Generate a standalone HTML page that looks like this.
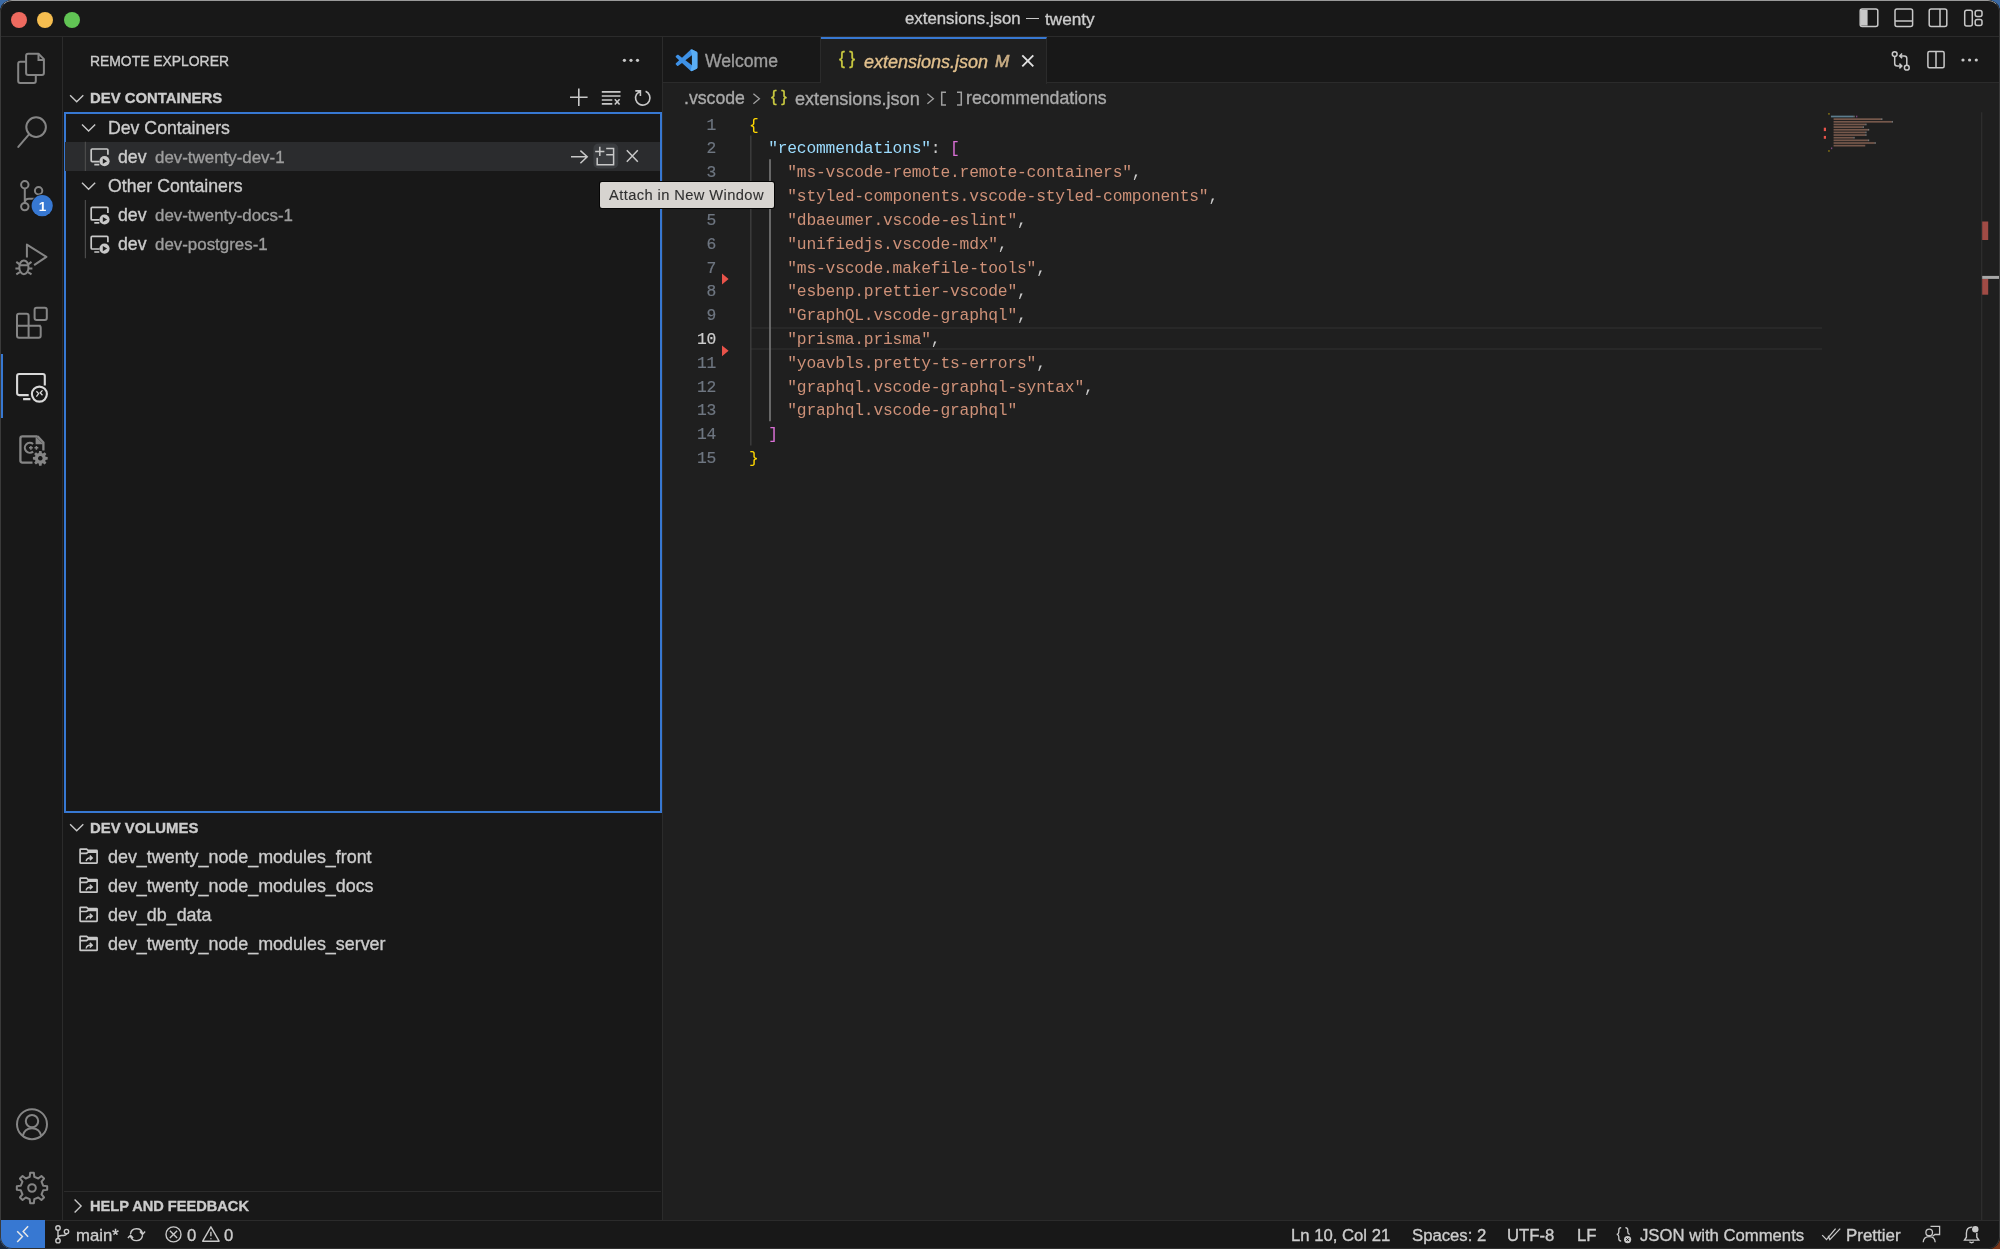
<!DOCTYPE html>
<html><head><meta charset="utf-8">
<style>
*{box-sizing:border-box;margin:0;padding:0}
html,body{width:2000px;height:1249px;overflow:hidden;background:#3b6aa5}
.cornerbl{position:absolute;left:0;top:1200px;width:30px;height:49px;background:#1a2638}
.cornerbr{position:absolute;left:1970px;top:1200px;width:30px;height:49px;background:#7a3518}
body{font-family:"Liberation Sans",sans-serif;color:#cccccc;position:relative}
.abs{position:absolute}
.win{position:absolute;left:0;top:0;width:2000px;height:1249px;border-radius:12px;overflow:hidden;background:#181818}
.t{position:absolute;white-space:pre;line-height:1;will-change:transform;-webkit-text-stroke:0.35px currentColor}
svg{position:absolute;overflow:visible}
.ic{fill:none;stroke:#c5c5c5;stroke-width:1.6}
.ab{fill:none;stroke:#868686;stroke-width:2}
.code{font-family:"Liberation Mono",monospace;font-size:15.87px}
.ln{position:absolute;left:663px;width:53px;text-align:right;font-family:"Liberation Mono",monospace;font-size:16.3px;letter-spacing:-0.26px;color:#6e7681;line-height:23.82px;height:23.82px;padding-top:2.3px;will-change:transform;-webkit-text-stroke:0.2px currentColor}
.cl{position:absolute;left:749px;font-family:"Liberation Mono",monospace;font-size:16.3px;letter-spacing:-0.2px;line-height:23.82px;height:23.82px;padding-top:2.3px;white-space:pre;color:#cccccc;will-change:transform}
.s{color:#ce9178}
.k{color:#9cdcfe}
.b1{color:#ffd700}
.b2{color:#da70d6}
</style></head><body>
<div class="cornerbl"></div><div class="cornerbr"></div>
<div class="win">
  <!-- TITLE BAR -->
  <div class="abs" style="left:0;top:0;width:2000px;height:37px;background:#181818;border-bottom:1px solid #2b2b2b"></div>
  <div class="abs" style="left:0;top:0;width:2000px;height:1249px;border-radius:12px;border:1px solid #3a3a3a;border-top-color:#9a9a9a;border-bottom-color:#303030;pointer-events:none;z-index:50"></div>
  <div class="abs" style="left:10.5px;top:11.5px;width:16px;height:16px;border-radius:50%;background:#ee6a5f"></div>
  <div class="abs" style="left:37px;top:11.5px;width:16px;height:16px;border-radius:50%;background:#f5bd4f"></div>
  <div class="abs" style="left:63.5px;top:11.5px;width:16px;height:16px;border-radius:50%;background:#61c454"></div>
  <div class="t" style="left:905.2px;top:11px;font-size:16.8px;color:#cccccc">extensions.json</div>
  <div class="abs" style="left:1025.8px;top:17.6px;width:13.2px;height:1.4px;background:#c8c8c8"></div>
  <div class="t" style="left:1044.5px;top:11px;font-size:17.2px;color:#cccccc">twenty</div>

  <!-- ACTIVITY BAR -->
  <div class="abs" style="left:0;top:37px;width:63px;height:1183px;background:#181818;border-right:1px solid #2b2b2b"></div>
  <div class="abs" style="left:0;top:354px;width:3px;height:64px;background:#3778d2"></div>

  <!-- SIDEBAR -->
  <div class="abs" style="left:63px;top:37px;width:600px;height:1183px;background:#181818;border-right:1px solid #2b2b2b"></div>
  <div class="t" style="left:90px;top:54.5px;font-size:13.9px;color:#cccccc">REMOTE EXPLORER</div>
  <div class="t" style="left:90px;top:91px;font-size:14.9px;font-weight:bold;color:#cccccc">DEV CONTAINERS</div>
  <div class="abs" style="left:64px;top:112.3px;width:598px;height:700.5px;border:2px solid #3778d2"></div>
  <div class="abs" style="left:65.3px;top:141.5px;width:594.4px;height:29.5px;background:#2b2c2e"></div>
  <div class="t" style="left:107.5px;top:120px;font-size:17.7px;color:#cccccc">Dev Containers</div>
  <div class="t" style="left:118px;top:148.7px;font-size:17.7px;color:#cccccc">dev</div>
  <div class="t" style="left:155px;top:149.7px;font-size:16.9px;color:#9d9d9d">dev-twenty-dev-1</div>
  <div class="t" style="left:107.5px;top:178px;font-size:17.7px;color:#cccccc">Other Containers</div>
  <div class="t" style="left:118px;top:207px;font-size:17.7px;color:#cccccc">dev</div>
  <div class="t" style="left:155px;top:208px;font-size:16.9px;color:#9d9d9d">dev-twenty-docs-1</div>
  <div class="t" style="left:118px;top:236px;font-size:17.7px;color:#cccccc">dev</div>
  <div class="t" style="left:155px;top:237px;font-size:16.9px;color:#9d9d9d">dev-postgres-1</div>

  <div class="t" style="left:90px;top:821px;font-size:14.9px;font-weight:bold;color:#cccccc">DEV VOLUMES</div>
  <div class="t" style="left:107.5px;top:848.5px;font-size:17.9px;color:#cccccc">dev_twenty_node_modules_front</div>
  <div class="t" style="left:107.5px;top:877.5px;font-size:17.9px;color:#cccccc">dev_twenty_node_modules_docs</div>
  <div class="t" style="left:107.5px;top:906.5px;font-size:17.9px;color:#cccccc">dev_db_data</div>
  <div class="t" style="left:107.5px;top:935.5px;font-size:17.9px;color:#cccccc">dev_twenty_node_modules_server</div>

  <div class="abs" style="left:64px;top:1191px;width:597px;height:1.3px;background:#2b2b2b"></div>
  <div class="t" style="left:90px;top:1199px;font-size:14.6px;font-weight:bold;color:#cccccc">HELP AND FEEDBACK</div>

  <!-- EDITOR -->
  <div class="abs" style="left:663px;top:37px;width:1337px;height:1183px;background:#1f1f1f"></div>
  <div class="abs" style="left:663px;top:37px;width:1337px;height:45.5px;background:#181818;border-bottom:1px solid #2b2b2b"></div>
  <div class="abs" style="left:663px;top:37px;width:158px;height:45.5px;background:#181818;border-right:1px solid #2b2b2b;border-bottom:1px solid #2b2b2b"></div>
  <div class="abs" style="left:821px;top:37px;width:226px;height:46.5px;background:#1f1f1f;border-right:1px solid #2b2b2b;border-top:2px solid #3778d2"></div>
  <div class="t" style="left:705px;top:53px;font-size:17.6px;color:#9d9d9d">Welcome</div>
  <div class="t" style="left:864px;top:53.3px;font-size:18px;font-style:italic;color:#e2c08d">extensions.json</div>
  <div class="t" style="left:995px;top:53px;font-size:17.2px;font-style:italic;font-weight:normal;color:#c9ad84;-webkit-text-stroke:0.6px #c9ad84">M</div>

  <div class="t" style="left:684px;top:90px;font-size:17.7px;color:#a9a9a9">.vscode</div>
  <div class="t" style="left:795px;top:90px;font-size:18.1px;color:#a9a9a9">extensions.json</div>
  <div class="t" style="left:966px;top:90px;font-size:17.7px;color:#a9a9a9">recommendations</div>


  <div class="t" style="left:839px;top:50.3px;font-size:17.6px;color:#cbcb41;letter-spacing:-0.3px">{ }</div>
  <div class="t" style="left:771px;top:88.6px;font-size:16.8px;color:#cbcb41;letter-spacing:0px">{ }</div>
  <div class="abs" style="left:751px;top:326.6px;width:1071px;height:23.8px;border-top:2.4px solid #282828;border-bottom:2.4px solid #282828"></div>
  <svg width="2000" height="1249" style="left:0;top:0;z-index:19">
<rect x="1828.30" y="113.00" width="1.32" height="1.7" fill="#ffd700" opacity="0.5"/>
<rect x="1830.94" y="115.65" width="22.44" height="1.7" fill="#9cdcfe" opacity="0.5"/>
<rect x="1853.38" y="115.65" width="1.32" height="1.7" fill="#cccccc" opacity="0.5"/>
<rect x="1856.02" y="115.65" width="1.32" height="1.7" fill="#da70d6" opacity="0.5"/>
<rect x="1833.58" y="118.30" width="47.52" height="1.7" fill="#ce9178" opacity="0.5"/>
<rect x="1881.10" y="118.30" width="1.32" height="1.7" fill="#cccccc" opacity="0.5"/>
<rect x="1833.58" y="120.95" width="58.08" height="1.7" fill="#ce9178" opacity="0.5"/>
<rect x="1891.66" y="120.95" width="1.32" height="1.7" fill="#cccccc" opacity="0.5"/>
<rect x="1833.58" y="123.60" width="31.68" height="1.7" fill="#ce9178" opacity="0.5"/>
<rect x="1865.26" y="123.60" width="1.32" height="1.7" fill="#cccccc" opacity="0.5"/>
<rect x="1833.58" y="126.25" width="29.04" height="1.7" fill="#ce9178" opacity="0.5"/>
<rect x="1862.62" y="126.25" width="1.32" height="1.7" fill="#cccccc" opacity="0.5"/>
<rect x="1833.58" y="128.90" width="34.32" height="1.7" fill="#ce9178" opacity="0.5"/>
<rect x="1867.90" y="128.90" width="1.32" height="1.7" fill="#cccccc" opacity="0.5"/>
<rect x="1833.58" y="131.55" width="31.68" height="1.7" fill="#ce9178" opacity="0.5"/>
<rect x="1865.26" y="131.55" width="1.32" height="1.7" fill="#cccccc" opacity="0.5"/>
<rect x="1833.58" y="134.20" width="31.68" height="1.7" fill="#ce9178" opacity="0.5"/>
<rect x="1865.26" y="134.20" width="1.32" height="1.7" fill="#cccccc" opacity="0.5"/>
<rect x="1833.58" y="136.85" width="19.80" height="1.7" fill="#ce9178" opacity="0.5"/>
<rect x="1853.38" y="136.85" width="1.32" height="1.7" fill="#cccccc" opacity="0.5"/>
<rect x="1833.58" y="139.50" width="34.32" height="1.7" fill="#ce9178" opacity="0.5"/>
<rect x="1867.90" y="139.50" width="1.32" height="1.7" fill="#cccccc" opacity="0.5"/>
<rect x="1833.58" y="142.15" width="40.92" height="1.7" fill="#ce9178" opacity="0.5"/>
<rect x="1874.50" y="142.15" width="1.32" height="1.7" fill="#cccccc" opacity="0.5"/>
<rect x="1833.58" y="144.80" width="31.68" height="1.7" fill="#ce9178" opacity="0.5"/>
<rect x="1830.94" y="147.45" width="1.32" height="1.7" fill="#da70d6" opacity="0.5"/>
<rect x="1828.30" y="150.10" width="1.32" height="1.7" fill="#ffd700" opacity="0.5"/>
<rect x="1823.8" y="127.7" width="2.2" height="3.4" fill="#e8534a"/><rect x="1823.8" y="135.9" width="2.2" height="2.9" fill="#e8534a"/>
</svg>
  <!-- line numbers -->
  <div id="lns"></div>
  <div class="ln" style="top:111.6px">1</div>
  <div class="ln" style="top:135.4px">2</div>
  <div class="ln" style="top:159.2px">3</div>
  <div class="ln" style="top:183.1px">4</div>
  <div class="ln" style="top:206.9px">5</div>
  <div class="ln" style="top:230.7px">6</div>
  <div class="ln" style="top:254.5px">7</div>
  <div class="ln" style="top:278.3px">8</div>
  <div class="ln" style="top:302.2px">9</div>
  <div class="ln" style="top:326.0px;color:#cccccc">10</div>
  <div class="ln" style="top:349.8px">11</div>
  <div class="ln" style="top:373.6px">12</div>
  <div class="ln" style="top:397.4px">13</div>
  <div class="ln" style="top:421.3px">14</div>
  <div class="ln" style="top:445.1px">15</div>

  <div class="cl" style="top:111.6px"><span class="b1">{</span></div>
  <div class="cl" style="top:135.4px">  <span class="k">"recommendations"</span>: <span class="b2">[</span></div>
  <div class="cl" style="top:159.2px">    <span class="s">"ms-vscode-remote.remote-containers"</span>,</div>
  <div class="cl" style="top:183.1px">    <span class="s">"styled-components.vscode-styled-components"</span>,</div>
  <div class="cl" style="top:206.9px">    <span class="s">"dbaeumer.vscode-eslint"</span>,</div>
  <div class="cl" style="top:230.7px">    <span class="s">"unifiedjs.vscode-mdx"</span>,</div>
  <div class="cl" style="top:254.5px">    <span class="s">"ms-vscode.makefile-tools"</span>,</div>
  <div class="cl" style="top:278.3px">    <span class="s">"esbenp.prettier-vscode"</span>,</div>
  <div class="cl" style="top:302.2px">    <span class="s">"GraphQL.vscode-graphql"</span>,</div>
  <div class="cl" style="top:326.0px">    <span class="s">"prisma.prisma"</span>,</div>
  <div class="cl" style="top:349.8px">    <span class="s">"yoavbls.pretty-ts-errors"</span>,</div>
  <div class="cl" style="top:373.6px">    <span class="s">"graphql.vscode-graphql-syntax"</span>,</div>
  <div class="cl" style="top:397.4px">    <span class="s">"graphql.vscode-graphql"</span></div>
  <div class="cl" style="top:421.3px">  <span class="b2">]</span></div>
  <div class="cl" style="top:445.1px"><span class="b1">}</span></div>

  <!-- STATUS BAR -->
  <div class="abs" style="left:0;top:1220px;width:2000px;height:29px;background:#181818;border-top:1px solid #2b2b2b"></div>
  <div class="abs" style="left:0;top:1220px;width:45px;height:29px;background:#3778d2"></div>
  <div class="t" style="left:76px;top:1227.8px;font-size:16.7px;color:#cccccc">main*</div>
  <div class="t" style="left:187px;top:1227.8px;font-size:16.7px;color:#cccccc">0</div>
  <div class="t" style="left:224px;top:1227.8px;font-size:16.7px;color:#cccccc">0</div>
  <div class="t" style="left:1290.5px;top:1227.8px;font-size:16.7px;color:#cccccc">Ln 10, Col 21</div>
  <div class="t" style="left:1412px;top:1227.8px;font-size:16.7px;color:#cccccc">Spaces: 2</div>
  <div class="t" style="left:1507px;top:1227.8px;font-size:16.7px;color:#cccccc">UTF-8</div>
  <div class="t" style="left:1577px;top:1227.8px;font-size:16.7px;color:#cccccc">LF</div>
  <div class="t" style="left:1640px;top:1227.8px;font-size:16.7px;color:#cccccc">JSON with Comments</div>
  <div class="t" style="left:1845.5px;top:1227.8px;font-size:16.95px;color:#cccccc">Prettier</div>

  <svg width="2000" height="1249" style="left:0;top:0;z-index:20">
<g fill="none" stroke="#858585" stroke-width="2" stroke-linejoin="round">
<path d="M26.1,55.7 Q26.1,53.7 28.1,53.7 L38.5,53.7 L43.9,59.1 L43.9,73 Q43.9,75 41.9,75 L28.1,75 Q26.1,75 26.1,73 Z"/>
<path d="M38.5,53.7 L38.5,60.1 L43.9,60.1" stroke-linejoin="miter"/>
<path d="M26.1,61.85 L20.2,61.85 Q18.2,61.85 18.2,63.85 L18.2,81.1 Q18.2,83.1 20.2,83.1 L33.8,83.1 Q35.8,83.1 35.8,81.1 L35.8,75"/>
<circle cx="36.1" cy="127.1" r="9.8"/><path d="M29,134.4 L18.3,146.9" stroke-linecap="round"/>
<circle cx="24.8" cy="184.8" r="3.7"/><circle cx="38.6" cy="190.7" r="3.7"/><circle cx="24.8" cy="206.6" r="3.7"/>
<path d="M24.8,188.5 V202.9 M24.8,202.5 Q24.8,198.7 29,198.7 L34,198.7 Q38.6,198.7 38.6,194.4"/>
<path d="M26.9,257.6 V244.6 L46.4,256.9 L34.1,265.2"/>
<ellipse cx="23.9" cy="267.3" rx="4.6" ry="6.9"/><path d="M19.4,265.3 H28.4 M16.3,261.9 L19.6,264.4 M15.4,268.5 H19.3 M16.3,274.4 L19.8,272.2 M31.5,261.9 L28.2,264.4 M32.4,268.5 H28.5 M31.5,274.4 L28,272.2"/>
<path d="M17,315.8 Q17,313.8 19,313.8 L26.6,313.8 Q28.6,313.8 28.6,315.8 L28.6,325.8 L38.7,325.8 Q40.7,325.8 40.7,327.8 L40.7,335.7 Q40.7,337.7 38.7,337.7 L19,337.7 Q17,337.7 17,335.7 Z M17,325.8 H40.7 M28.6,325.8 V337.7"/>
<rect x="34.6" y="307.8" width="12.2" height="12.1" rx="2"/>
<path d="M37.6,436.4 H22.4 Q20.4,436.4 20.4,438.4 V460.6 Q20.4,462.6 22.4,462.6 H32.5 M37.6,436.4 L43.4,442.5 V450.5" stroke-width="2.3"/>
<path d="M35.6,436.4 L43.4,444.2 H35.6 Z" fill="#858585" stroke="none"/>
<path d="M33.1,444 A5,5 0 1 0 33.1,451.6" stroke-width="2.1"/>
<path d="M29,447.8 h3.8 M30.9,445.9 v3.8 M34.5,447.8 h3.8 M36.4,445.9 v3.8" stroke-width="1.5"/>
<path d="M38.72,453.03 L39.05,450.91 L41.55,450.91 L41.88,453.03 L42.91,453.46 L44.64,452.18 L46.42,453.96 L45.14,455.69 L45.57,456.72 L47.69,457.05 L47.69,459.55 L45.57,459.88 L45.14,460.91 L46.42,462.64 L44.64,464.42 L42.91,463.14 L41.88,463.57 L41.55,465.69 L39.05,465.69 L38.72,463.57 L37.69,463.14 L35.96,464.42 L34.18,462.64 L35.46,460.91 L35.03,459.88 L32.91,459.55 L32.91,457.05 L35.03,456.72 L35.46,455.69 L34.18,453.96 L35.96,452.18 L37.69,453.46Z M40.3,456 a2.3,2.3 0 1 0 0.01,0 Z" fill="#858585" stroke="none" fill-rule="evenodd"/>
<circle cx="32" cy="1124.2" r="15"/><circle cx="32" cy="1121.1" r="6.2"/><path d="M22.6,1136.2 Q24.5,1128.3 32,1128.3 Q39.5,1128.3 41.4,1136.2"/>
<path d="M29.69,1176.84 L30.13,1172.81 L33.87,1172.81 L34.31,1176.84 L38.26,1178.47 L41.42,1175.94 L44.06,1178.58 L41.53,1181.74 L43.16,1185.69 L47.19,1186.13 L47.19,1189.87 L43.16,1190.31 L41.53,1194.26 L44.06,1197.42 L41.42,1200.06 L38.26,1197.53 L34.31,1199.16 L33.87,1203.19 L30.13,1203.19 L29.69,1199.16 L25.74,1197.53 L22.58,1200.06 L19.94,1197.42 L22.47,1194.26 L20.84,1190.31 L16.81,1189.87 L16.81,1186.13 L20.84,1185.69 L22.47,1181.74 L19.94,1178.58 L22.58,1175.94 L25.74,1178.47Z"/><circle cx="32" cy="1188" r="3.8"/>
</g>
<g fill="none" stroke="#d9d9d9" stroke-width="2.1">
<path d="M28.7,395.1 H19.1 Q17.1,395.1 17.1,393.1 V376 Q17.1,374 19.1,374 H42.8 Q44.8,374 44.8,376 V385.6 M23.1,399.1 H30.4"/>
<circle cx="39.4" cy="394.1" r="7.5"/>
<path d="M36.4,391.2 L38.6,393.6 L36.4,396.6 M42.5,390.4 L40.2,392.8 L42.5,395.2" stroke-width="1.3"/>
</g>
<circle cx="42.2" cy="205.7" r="11.4" fill="#181818"/><circle cx="42.2" cy="205.7" r="10.6" fill="#3778d2"/>
<text x="42.4" y="210.9" font-family="Liberation Sans" font-weight="bold" font-size="13.5" fill="#ffffff" text-anchor="middle">1</text>
<g fill="none" stroke="#c8c8c8" stroke-width="1.4">
<path d="M70.1,95.2 L76.7,101.7 L83.3,95.2"/>
<path d="M82,124.5 L88.6,131 L95.2,124.5"/>
<path d="M82,182.7 L88.6,189.2 L95.2,182.7"/>
<path d="M70.1,824.3 L76.7,830.8 L83.3,824.3"/>
<path d="M74.6,1199.5 L81.1,1206 L74.6,1212.5"/>
<path d="M570,97.3 H587.6 M578.8,88.4 V106.1" stroke-width="1.6"/>
<path d="M601.8,91.9 H620.5 M601.8,96 H620.5 M601.8,100 H612.3 M601.8,103.9 H612.3 M614.8,99.3 L619.6,104.5 M619.6,99.3 L614.8,104.5" stroke-width="1.6"/>
<path d="M645.6,91.3 A7.2,7.2 0 1 1 636.6,94.2 L640.2,90.9 M635.3,90.9 H640.4 V95.9" stroke-width="1.6"/>
</g>
<g fill="#c8c8c8"><circle cx="624.4" cy="60.3" r="1.6"/><circle cx="631" cy="60.3" r="1.6"/><circle cx="637.5" cy="60.3" r="1.6"/></g>
<path d="M85.4,141.7 V171 M85.4,200 V258.3" stroke="#4a4a4a" stroke-width="1.2"/>
<g fill="none" stroke="#c8c8c8" stroke-width="1.7"><path d="M99.5,161.6 H92.2 Q91.2,161.6 91.2,160.6 V150.0 Q91.2,149.0 92.2,149.0 H106.9 Q107.9,149.0 107.9,150.0 V154.8 M94.3,164.6 H99.3"/></g>
<circle cx="104.5" cy="161.2" r="5.6" fill="#181818" opacity="0"/><circle cx="104.5" cy="161.2" r="5.1" fill="#c8c8c8"/><path d="M102.8,158.6 L107.1,161.2 L102.8,163.8 Z" fill="#1f1f1f"/>
<g fill="none" stroke="#c8c8c8" stroke-width="1.7"><path d="M99.5,219.9 H92.2 Q91.2,219.9 91.2,218.9 V208.3 Q91.2,207.3 92.2,207.3 H106.9 Q107.9,207.3 107.9,208.3 V213.1 M94.3,222.9 H99.3"/></g>
<circle cx="104.5" cy="219.5" r="5.6" fill="#181818" opacity="0"/><circle cx="104.5" cy="219.5" r="5.1" fill="#c8c8c8"/><path d="M102.8,216.9 L107.1,219.5 L102.8,222.1 Z" fill="#1f1f1f"/>
<g fill="none" stroke="#c8c8c8" stroke-width="1.7"><path d="M99.5,249.0 H92.2 Q91.2,249.0 91.2,248.0 V237.4 Q91.2,236.4 92.2,236.4 H106.9 Q107.9,236.4 107.9,237.4 V242.2 M94.3,252.0 H99.3"/></g>
<circle cx="104.5" cy="248.6" r="5.6" fill="#181818" opacity="0"/><circle cx="104.5" cy="248.6" r="5.1" fill="#c8c8c8"/><path d="M102.8,246.0 L107.1,248.6 L102.8,251.2 Z" fill="#1f1f1f"/>
<rect x="593.4" y="143.6" width="24.8" height="24.8" rx="5" fill="#3a3c3f"/>
<g fill="none" stroke="#c8c8c8" stroke-width="1.5">
<path d="M571,156.8 H587.2 M580.4,150.6 L587.2,156.8 L580.4,163.2"/>
<path d="M595.2,151.4 H604.4 M599.8,146.8 V156 M606.2,148.6 H613.6 V164.8 H597.2 V157.8 M606.2,154.8 H613.6"/>
<path d="M626.8,150.2 L637.8,161.8 M637.8,150.2 L626.8,161.8"/>
</g>
<g fill="none" stroke="#c8c8c8" stroke-width="1.7" transform="translate(0,0.0)"><path d="M80.1,849.6 Q80.1,849.1 80.6,849.1 H86.6 L88,850.4 H96.6 Q97.1,850.4 97.1,850.9 V862.6 Q97.1,863.1 96.6,863.1 H80.6 Q80.1,863.1 80.1,862.6 Z M80.1,853.3 H86.6 L88,852.1 H97.1"/><path d="M86.2,861.2 Q86.6,857.6 91.8,857.8 M89.8,855.6 L92.2,857.9 L89.8,860.2" stroke-width="1.5"/></g>
<g fill="none" stroke="#c8c8c8" stroke-width="1.7" transform="translate(0,29.1)"><path d="M80.1,849.6 Q80.1,849.1 80.6,849.1 H86.6 L88,850.4 H96.6 Q97.1,850.4 97.1,850.9 V862.6 Q97.1,863.1 96.6,863.1 H80.6 Q80.1,863.1 80.1,862.6 Z M80.1,853.3 H86.6 L88,852.1 H97.1"/><path d="M86.2,861.2 Q86.6,857.6 91.8,857.8 M89.8,855.6 L92.2,857.9 L89.8,860.2" stroke-width="1.5"/></g>
<g fill="none" stroke="#c8c8c8" stroke-width="1.7" transform="translate(0,58.2)"><path d="M80.1,849.6 Q80.1,849.1 80.6,849.1 H86.6 L88,850.4 H96.6 Q97.1,850.4 97.1,850.9 V862.6 Q97.1,863.1 96.6,863.1 H80.6 Q80.1,863.1 80.1,862.6 Z M80.1,853.3 H86.6 L88,852.1 H97.1"/><path d="M86.2,861.2 Q86.6,857.6 91.8,857.8 M89.8,855.6 L92.2,857.9 L89.8,860.2" stroke-width="1.5"/></g>
<g fill="none" stroke="#c8c8c8" stroke-width="1.7" transform="translate(0,87.3)"><path d="M80.1,849.6 Q80.1,849.1 80.6,849.1 H86.6 L88,850.4 H96.6 Q97.1,850.4 97.1,850.9 V862.6 Q97.1,863.1 96.6,863.1 H80.6 Q80.1,863.1 80.1,862.6 Z M80.1,853.3 H86.6 L88,852.1 H97.1"/><path d="M86.2,861.2 Q86.6,857.6 91.8,857.8 M89.8,855.6 L92.2,857.9 L89.8,860.2" stroke-width="1.5"/></g>
<g transform="translate(675.6,49.4) scale(0.218)"><path d="M96.5 10.8 L75.9 0.9 C73.5 -0.3 70.7 0.2 68.8 2.1 L29.4 38 L12.2 25 C10.6 23.8 8.4 23.9 6.9 25.2 L1.4 30.2 C-0.4 31.9 -0.4 34.7 1.4 36.3 L16.3 50 L1.4 63.6 C-0.4 65.3 -0.4 68.1 1.4 69.7 L6.9 74.7 C8.4 76.1 10.6 76.2 12.2 75 L29.4 61.9 L68.8 97.9 C70.7 99.8 73.5 100.3 75.9 99.1 L96.5 89.2 C98.6 88.2 100 86 100 83.6 V16.4 C100 14 98.6 11.8 96.5 10.8 Z M75 72.7 L45.1 50 L75 27.3 Z" fill="#3e91e6"/><path d="M96.5 10.8 L75.9 0.9 C73.5 -0.3 70.7 0.2 68.8 2.1 L75 27.3 V72.7 L68.8 97.9 C70.7 99.8 73.5 100.3 75.9 99.1 L96.5 89.2 C98.6 88.2 100 86 100 83.6 V16.4 C100 14 98.6 11.8 96.5 10.8 Z" fill="#5aaef5"/></g>
<path d="M1022.3,55.3 L1033.3,66.3 M1033.3,55.3 L1022.3,66.3" stroke="#e0e0e0" stroke-width="1.9" fill="none"/>
<g fill="none" stroke="#a0a0a0" stroke-width="1.3"><path d="M753.4,93.8 L759.4,98.8 L753.4,103.8 M927.4,93.8 L933.4,98.8 L927.4,103.8"/><path d="M946,92.3 H941.7 V104.9 H946 M957,92.3 H961.3 V104.9 H957" stroke-width="1.5"/></g>
<g fill="none" stroke="#c8c8c8" stroke-width="1.5">
<circle cx="1894.7" cy="54.1" r="2.4"/><circle cx="1906.8" cy="67.7" r="2.4"/><path d="M1894.7,56.5 V63.5 Q1894.7,66 1897.2,66 H1901.5 M1899.4,63.6 L1901.8,66 L1899.4,68.4 M1906.8,65.3 V58.4 Q1906.8,55.9 1904.3,55.9 H1900 M1902.1,53.5 L1899.7,55.9 L1902.1,58.3"/>
<rect x="1927.9" y="51.6" width="16.2" height="16.2" rx="1.5"/><path d="M1936,51.6 V67.8"/>
</g>
<g fill="#c8c8c8"><circle cx="1963" cy="60" r="1.6"/><circle cx="1969.6" cy="60" r="1.6"/><circle cx="1976.3" cy="60" r="1.6"/></g>
<g fill="none" stroke="#c8c8c8" stroke-width="1.5">
<rect x="1860.2" y="9" width="17.6" height="17.4" rx="2"/>
<path d="M1861,9.8 H1867.6 V25.6 H1861 Z" fill="#c8c8c8" stroke="none"/>
<rect x="1895" y="9" width="17.6" height="17.4" rx="2"/><path d="M1895,21 H1912.6"/>
<rect x="1929.2" y="9" width="17.6" height="17.4" rx="2"/><path d="M1940,9 V26.4"/>
<rect x="1964.7" y="10.2" width="7.6" height="15.7" rx="2"/><rect x="1975.2" y="10.4" width="6.8" height="6" rx="2"/><rect x="1975.2" y="19.5" width="6.8" height="6" rx="2"/>
</g>
<path d="M750.8,135.4 V445.4" stroke="#404040" stroke-width="1.3"/>
<path d="M770,159.2 V421.2" stroke="#707070" stroke-width="1.8"/>
<path d="M722,273.6 L728.6,279 L722,284.4 Z M722,345.4 L728.6,350.8 L722,356.2 Z" fill="#e8534a"/>
<path d="M1981.7,112.3 V1220" stroke="#2f2f2f" stroke-width="1.2"/>
<rect x="1982.2" y="221.5" width="6" height="18.5" fill="#a04b45"/><rect x="1982.2" y="278.7" width="6" height="16" fill="#a04b45"/>
<rect x="1982.2" y="275.9" width="18" height="3" fill="#a8a8a8"/>
<g fill="none" stroke="#e8e8e8" stroke-width="1.5"><path d="M17.2,1231.2 L22.4,1236.6 L17.2,1242 M28.1,1226.2 L23.2,1231.6 L28.1,1236.8"/></g>
<g fill="none" stroke="#c8c8c8" stroke-width="1.4">
<circle cx="58" cy="1228" r="2.2"/><circle cx="66.5" cy="1231.6" r="2.2"/><circle cx="58" cy="1240.7" r="2.2"/><path d="M58,1230.2 V1238.5 M58,1237.6 Q58.4,1235.5 61.5,1235.5 Q66.2,1235.5 66.5,1233.8"/>
<path d="M130.5,1234 A6.1,6.1 0 0 1 142.5,1233.6 M142.5,1235.4 A6.1,6.1 0 0 1 130.5,1235.8 M139.9,1231.6 L142.5,1234.4 L145.1,1231.6 M127.9,1238 L130.5,1235.2 L133.1,1238"/>
<circle cx="173.5" cy="1234.4" r="7.5"/><path d="M169.9,1230.8 L177.1,1238 M177.1,1230.8 L169.9,1238"/>
<path d="M210.9,1226.8 L219.1,1241.2 H202.7 Z" stroke-linejoin="round"/><path d="M210.9,1231.8 V1236.3 M210.9,1238.3 V1239.3"/>
</g>
<g fill="none" stroke="#c8c8c8" stroke-width="1.3">
<path d="M1621.2,1227.6 Q1618.6,1227.8 1618.8,1230.5 V1232 Q1618.8,1234 1616.8,1234.4 Q1618.8,1234.8 1618.8,1236.8 V1238.3 Q1618.6,1241 1621.2,1241.2 M1625.4,1227.6 Q1628,1227.8 1627.8,1230.5 V1232 Q1627.8,1234 1629.8,1234.4"/>
<circle cx="1627.6" cy="1239.6" r="3.6" fill="#c8c8c8" stroke="none"/><path d="M1626.2,1238.2 L1629,1241 M1629,1238.2 L1626.2,1241" stroke="#181818" stroke-width="1"/>
<path d="M1822.2,1235.1 L1826.5,1239.6 L1835.6,1228.6 M1828.2,1235.8 L1829.8,1239.6 L1840.2,1228.6"/>
<path d="M1930.5,1226.3 H1939.6 V1234.5 H1935 L1932.5,1236.3 M1923.2,1242.3 Q1923.6,1236.6 1929.2,1236.6 Q1934.8,1236.6 1935.2,1242.3"/><circle cx="1929.2" cy="1232.4" r="3.3"/>
<path d="M1964.5,1240.1 H1978.8 L1976.8,1237.2 V1233.2 Q1976.8,1227.2 1971.6,1227.2 Q1966.4,1227.2 1966.4,1233.2 V1237.2 Z M1969.4,1241.8 Q1971.6,1243.6 1973.8,1241.8" stroke-width="1.4"/>
</g>
<circle cx="1975.3" cy="1229.3" r="3.9" fill="#181818"/><circle cx="1975.3" cy="1229.3" r="3.2" fill="#c8c8c8"/>
</svg>
  <!-- TOOLTIP -->
  <div class="abs" style="left:599px;top:181.2px;width:176px;height:27.6px;background:#050505;border-radius:3px;z-index:30"></div>
  <div class="abs" style="left:600px;top:182.2px;width:174px;height:25.6px;background:#d7d4d0;border-radius:2px;z-index:31"></div>
  <div class="t" style="left:609.3px;top:188px;font-size:14.7px;letter-spacing:0.4px;color:#303030;z-index:32;-webkit-text-stroke:0.1px #303030">Attach in New Window</div>
</div>
</body></html>
